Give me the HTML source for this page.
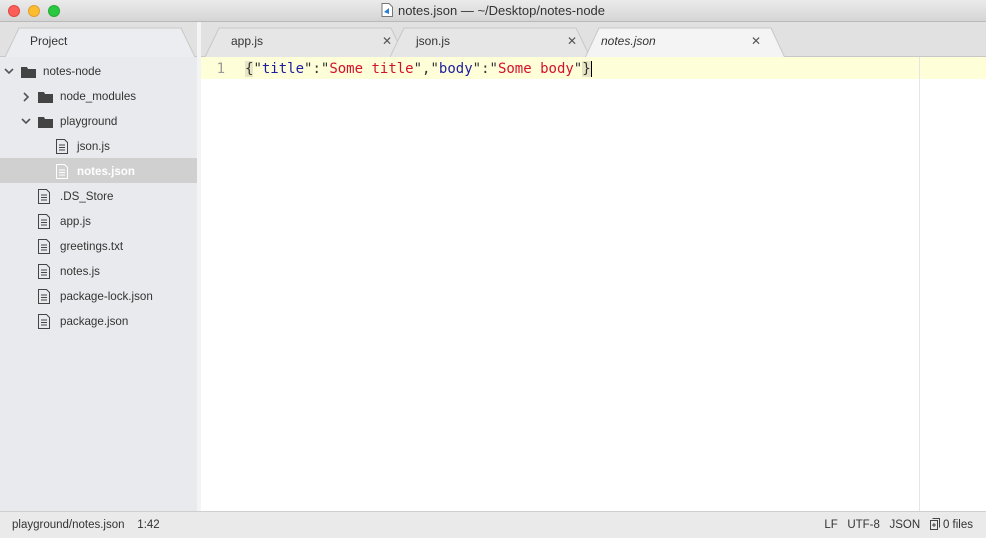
<!DOCTYPE html><html><head><style>
*{margin:0;padding:0;box-sizing:border-box}
body{width:986px;height:538px;overflow:hidden;font-family:"Liberation Sans",sans-serif;font-size:12px;color:#333;background:#fff;position:relative}
.abs{position:absolute}
#title{left:0;top:0;width:986px;height:22px;background:linear-gradient(#ebebeb,#d5d5d5);border-bottom:1px solid #b9b9b9;text-align:center;line-height:22px;font-size:13px;color:#333}
.dot{top:5px;width:12px;height:12px;border-radius:50%}
#side{left:0;top:22px;width:197px;height:489px;background:#e8eaed}
#gap{left:197px;top:22px;width:4px;height:489px;background:#f4f4f4}
#tabbar{left:201px;top:22px;width:785px;height:35px;background:#e1e1e1;border-bottom:1px solid #c8c8c8}
#ptabbar{left:0;top:22px;width:197px;height:35px;background:#e1e1e1;border-bottom:1px solid #c8c8c8}
.tab{top:27px;height:30px;line-height:28px;padding-left:22px;font-size:12px;color:#333}
.tab svg{position:absolute;left:0;top:0}
.tab span{position:relative}
.tab .x{position:absolute;top:0;font-size:12px;color:#555;font-style:normal}
.row{left:0;width:197px;height:25px;line-height:25px;color:#333;font-size:11.6px}
.sel{background:#d0d0d0;color:#fff;font-weight:bold}
.ic{position:absolute;top:7px}
#code{left:201px;top:57px;width:785px;height:22px;background:#fefed9}
#gut{left:201px;top:58px;width:40px;line-height:22px;text-align:right;font-family:"DejaVu Sans Mono",monospace;font-size:14px;color:#999;padding-right:16px}
#txt{left:245px;top:58px;line-height:22px;font-family:"DejaVu Sans Mono",monospace;font-size:14px;color:#333;white-space:pre}
.k{color:#1d1d9f}.s{color:#d3112c}.b{background:#e6e6c4}
#ruler{left:919px;top:57px;width:1px;height:454px;background:#e5e5e5}
#status{left:0;top:511px;width:986px;height:27px;background:#eaeaea;border-top:1px solid #cfcfcf;line-height:26px;font-size:11.5px;color:#333}
</style></head><body>
<div id="side" class="abs"></div>
<div id="gap" class="abs"></div>
<div id="ptabbar" class="abs"></div>
<div id="tabbar" class="abs"></div>
<div id="title" class="abs"><svg width="12" height="14" style="vertical-align:-2px;margin-right:5px" viewBox="0 0 12 14"><path d="M1 .5h7l3.5 3.5v9.5h-10.5z" fill="#fff" stroke="#777"/><path d="M3 9l5-4v6z" fill="#2a7dd4"/></svg>notes.json — ~/Desktop/notes-node</div>
<div class="abs dot" style="left:8px;background:#fc5f57;border:1px solid #df4744"></div>
<div class="abs dot" style="left:28px;background:#fdbc2e;border:1px solid #de9f34"></div>
<div class="abs dot" style="left:48px;background:#28c840;border:1px solid #27aa35"></div>
<div class="abs tab" style="left:5px;width:190px;padding-left:25px"><svg width="190" height="31"><path d="M0 30 L14 1 H176 L190 30" fill="#ebedf0" stroke="#c8c8c8"/></svg><span>Project</span></div>
<div class="abs tab" style="left:205px;width:200px;padding-left:26px"><svg width="200" height="31"><path d="M0 30 L14 1 H186 L200 30" fill="#e6e6e6" stroke="#c8c8c8"/></svg><span>app.js</span><span class="x" style="left:177px">✕</span></div>
<div class="abs tab" style="left:390px;width:200px;padding-left:26px"><svg width="200" height="31"><path d="M0 30 L14 1 H186 L200 30" fill="#e6e6e6" stroke="#c8c8c8"/></svg><span>json.js</span><span class="x" style="left:177px">✕</span></div>
<div class="abs tab" style="left:585px;width:200px;padding-left:16px;font-style:italic"><svg width="200" height="31"><path d="M0 31 L14 1 H186 L200 31" fill="#f4f4f4" stroke="#c8c8c8"/></svg><span>notes.json</span><span class="x" style="left:166px">✕</span></div>

<div class="abs row" style="top:59px;padding-left:43px"><svg class="ic" style="left:4px;top:8px" width="10" height="8"><path d="M1 2l4 4 4-4" fill="none" stroke="#555" stroke-width="1.6"/></svg><svg class="ic" style="left:21px;top:7px" width="15" height="12"><path d="M0 1h6l1 2h8v9h-15z" fill="#444"/></svg>notes-node</div>
<div class="abs row" style="top:84px;padding-left:60px"><svg class="ic" style="left:22px;top:8px" width="8" height="10"><path d="M2 1l4 4-4 4" fill="none" stroke="#555" stroke-width="1.6"/></svg><svg class="ic" style="left:38px;top:7px" width="15" height="12"><path d="M0 1h6l1 2h8v9h-15z" fill="#444"/></svg>node_modules</div>
<div class="abs row" style="top:109px;padding-left:60px"><svg class="ic" style="left:21px;top:8px" width="10" height="8"><path d="M1 2l4 4 4-4" fill="none" stroke="#555" stroke-width="1.6"/></svg><svg class="ic" style="left:38px;top:7px" width="15" height="12"><path d="M0 1h6l1 2h8v9h-15z" fill="#444"/></svg>playground</div>
<div class="abs row" style="top:134px;padding-left:77px"><svg class="ic" style="left:56px;top:5px" width="12" height="15"><path d="M.5 .5h8l3 3v11h-11z M3 6h6M3 8.5h6M3 11h6" fill="none" stroke="#444"/></svg>json.js</div>
<div class="abs row sel" style="top:158px;height:25px;padding-left:77px;line-height:27px"><svg class="ic" style="left:56px;top:6px" width="12" height="15"><path d="M.5 .5h8l3 3v11h-11z M3 6h6M3 8.5h6M3 11h6" fill="none" stroke="#fff"/></svg>notes.json</div>
<div class="abs row" style="top:184px;padding-left:60px"><svg class="ic" style="left:38px;top:5px" width="12" height="15"><path d="M.5 .5h8l3 3v11h-11z M3 6h6M3 8.5h6M3 11h6" fill="none" stroke="#444"/></svg>.DS_Store</div>
<div class="abs row" style="top:209px;padding-left:60px"><svg class="ic" style="left:38px;top:5px" width="12" height="15"><path d="M.5 .5h8l3 3v11h-11z M3 6h6M3 8.5h6M3 11h6" fill="none" stroke="#444"/></svg>app.js</div>
<div class="abs row" style="top:234px;padding-left:60px"><svg class="ic" style="left:38px;top:5px" width="12" height="15"><path d="M.5 .5h8l3 3v11h-11z M3 6h6M3 8.5h6M3 11h6" fill="none" stroke="#444"/></svg>greetings.txt</div>
<div class="abs row" style="top:259px;padding-left:60px"><svg class="ic" style="left:38px;top:5px" width="12" height="15"><path d="M.5 .5h8l3 3v11h-11z M3 6h6M3 8.5h6M3 11h6" fill="none" stroke="#444"/></svg>notes.js</div>
<div class="abs row" style="top:284px;padding-left:60px"><svg class="ic" style="left:38px;top:5px" width="12" height="15"><path d="M.5 .5h8l3 3v11h-11z M3 6h6M3 8.5h6M3 11h6" fill="none" stroke="#444"/></svg>package-lock.json</div>
<div class="abs row" style="top:309px;padding-left:60px"><svg class="ic" style="left:38px;top:5px" width="12" height="15"><path d="M.5 .5h8l3 3v11h-11z M3 6h6M3 8.5h6M3 11h6" fill="none" stroke="#444"/></svg>package.json</div>

<div id="code" class="abs"></div>
<div id="ruler" class="abs"></div>
<div id="gut" class="abs">1</div>
<div id="txt" class="abs"><span class="b">{</span>"<span class="k">title</span>":"<span class="s">Some title</span>","<span class="k">body</span>":"<span class="s">Some body</span>"<span class="b">}</span><span style="border-left:1.5px solid #000"></span></div>

<div id="status" class="abs"><span style="position:absolute;left:12px">playground/notes.json&nbsp;&nbsp;&nbsp;&nbsp;1:42</span><span style="position:absolute;right:13px">LF&nbsp;&nbsp;&nbsp;UTF-8&nbsp;&nbsp;&nbsp;JSON&nbsp;&nbsp;&nbsp;<svg width="10" height="12" style="vertical-align:-2px" viewBox="0 0 10 12"><path d="M.5 2.5h7v9h-7zM2.5 .5h7v9" fill="none" stroke="#444"/><path d="M4 5v4M2 7h4" stroke="#444"/></svg> 0 files</span></div>
</body></html>
